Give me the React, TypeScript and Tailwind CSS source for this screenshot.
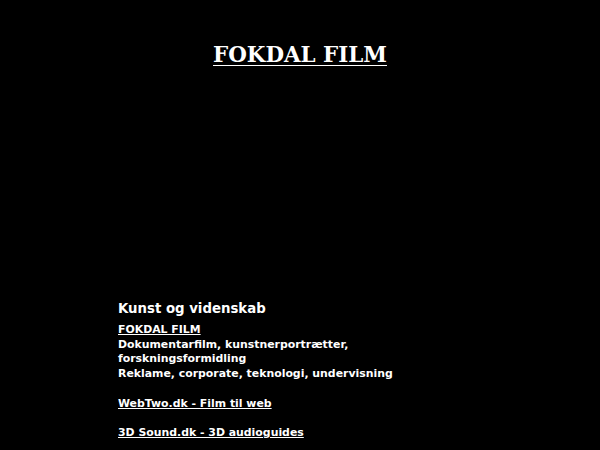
export default function App() {
  return (
    <div className="w-[600px] h-[450px] bg-black text-white overflow-hidden">
      <div className="pt-[40px] flex justify-center">
        <h1 className="text-[21.4px] leading-[30px] font-bold underline decoration-1 underline-offset-[3px] [font-family:'DejaVu_Serif',serif]">
          FOKDAL FILM
        </h1>
      </div>
      <div className="pl-[118px] pt-[230px] [font-family:'DejaVu_Sans',sans-serif] font-bold">
        <div className="text-[13.3px] leading-[17px]">Kunst og videnskab</div>
        <div className="mt-[6px] text-[10.9px] leading-[14.7px]">
          <div className="underline">FOKDAL FILM</div>
          <div>Dokumentarfilm, kunstnerportrætter,</div>
          <div>forskningsformidling</div>
          <div>Reklame, corporate, teknologi, undervisning</div>
          <div className="h-[14.7px]" />
          <div className="underline">WebTwo.dk - Film til web</div>
          <div className="h-[14.7px]" />
          <div className="underline">3D Sound.dk - 3D audioguides</div>
        </div>
      </div>
    </div>
  );
}
